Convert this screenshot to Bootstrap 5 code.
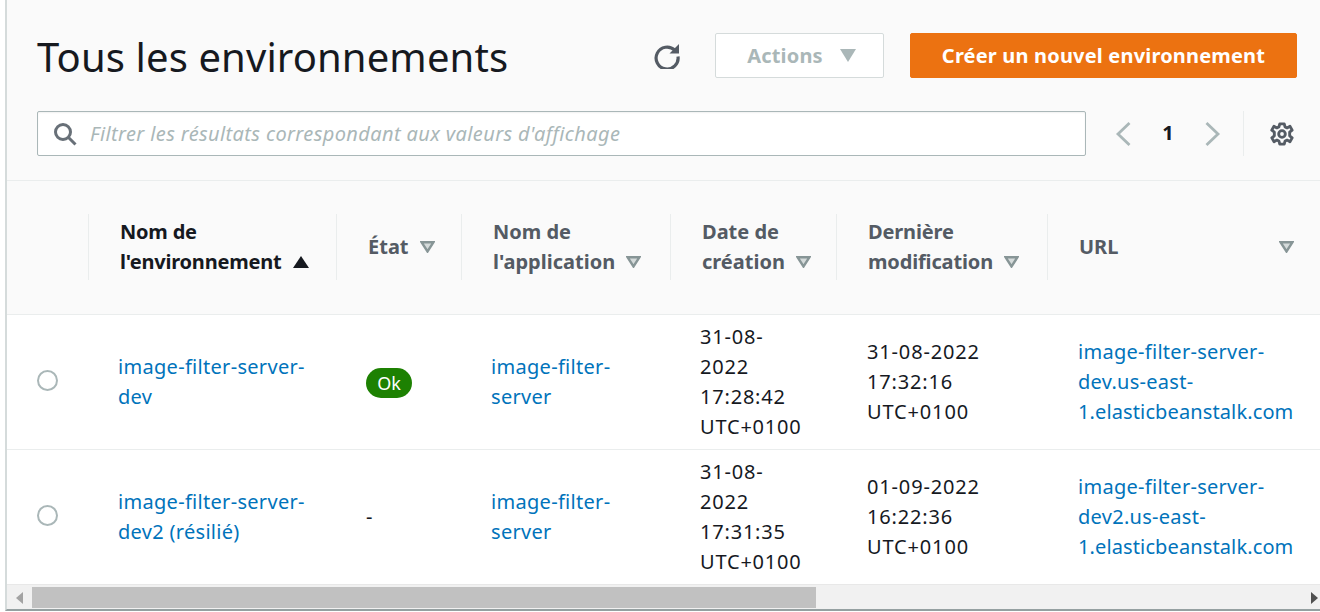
<!doctype html>
<html lang="fr"><head><meta charset="utf-8"><title>Tous les environnements</title>
<link href="https://cdn.jsdelivr.net/npm/bootstrap@5.3.0/dist/css/bootstrap.min.css" rel="stylesheet">
<style>
html,body{height:100%;overflow:hidden;background:#fff}
body{font-family:"Noto Sans","Open Sans",sans-serif;font-size:20px;line-height:30px;color:#16191f}
.frame{margin-left:5px;height:611px;width:1315px;border-left:2px solid #d5dbdb;border-bottom:2px solid #95a0a1;background:#fafafa;overflow:hidden}
.top{padding:33px 23px 24px 30px;border-bottom:1px solid #eaeded;flex:none}
.ttl{font-size:40px;line-height:50px;font-weight:400;margin:0;letter-spacing:.12px;padding-top:2px}
.hh{height:45px}
.refresh{width:26px;height:26px;margin-right:35px}
.btn-act,.btn-new{height:45px;font-size:20px;font-weight:700;border-radius:2px;line-height:28px;padding:0;display:flex;align-items:center;justify-content:center;letter-spacing:.18px}
.btn-act{width:169px;background:#fff;border:1px solid #d5dbdb;color:#aab7b8;gap:17px;margin-right:26px;padding-left:4px}
.btn-new{width:387px;background:#ec7211;border:1px solid #ec7211;color:#fff}
.filter{width:1049px;height:45px;background:#fff;border:1px solid #aab7b8;border-radius:2px;box-shadow:inset 0 1px 2px rgba(0,0,0,.06);padding-left:15px;gap:13px}
.filter input{flex:1;border:0;outline:0;background:transparent;font:italic 400 20px/30px "Noto Sans",sans-serif;color:#16191f;padding:0;letter-spacing:.38px}
.filter input::placeholder{color:#aab7b8;opacity:1}
.pager{margin-left:29px}
.pnum{font-weight:700;font-size:20px;width:20px;text-align:center;margin:0 27px;padding-bottom:2px}
.sep{width:1px;height:45px;background:#eaeded;margin-right:26px}
.gear{margin-right:3px}
.tblw{height:403px;overflow:hidden;flex:none}
table.envs{table-layout:fixed;width:1313px;border-collapse:collapse;margin:0}
.c0{width:81px}.c1{width:248px}.c2{width:125px}.c3{width:209px}.c4{width:166px}.c5{width:211px}.c6{width:273px}
.envs th{height:133px;padding:0;background:#fafafa;border-bottom:1px solid #eaeded;font-weight:700;font-size:20px;color:#545b64;vertical-align:middle}
.envs th .hc{height:66px;border-left:1px solid #eaeded;padding-left:31px;padding-right:10px;display:flex;align-items:center}
.envs th .hc.tight{padding-left:31px}
.envs th .hc.urlh{padding-right:26px}
.envs th.act{color:#16191f}
.envs th .wrap{line-height:30px}
.envs th.act .wrap{letter-spacing:-.2px}
.envs th .wrap.snug{letter-spacing:-.15px}
.envs td{height:135px;padding:0 10px 0 30px;background:#fff;border-bottom:1px solid #eaeded;vertical-align:middle;font-weight:400;color:#16191f}
.envs tr:last-child td{border-bottom:0}
.envs td a{color:#0073bb;text-decoration:none;display:block;letter-spacing:.3px}
.envs td.urlc{padding-left:31px}
.envs td.urlc a{letter-spacing:.28px}
.envs td.urlc a .lastl{letter-spacing:.12px}
.envs td.dt{letter-spacing:.8px}
.envs td.dt2{padding-left:31px;letter-spacing:.85px}
.tri{display:inline-block;vertical-align:1px;margin-left:11px}
.radio{display:block;width:21px;height:21px;border:2px solid #aab7b8;border-radius:50%;background:#fff;margin-bottom:2px}
.okp{display:block;margin-top:2px;height:30px;width:46px;background:#1d8102;color:#fff;border-radius:15px;text-align:center;font-size:18px;line-height:30px}
.sb{height:25px;background:#f1f1f1;border-top:1px solid #e8e8e8;flex:none}
.thumb{width:784px;height:21px;background:#c1c1c1;margin:2px 0 0 9px}
</style></head>
<body>
<div class="frame d-flex flex-column">
 <div class="top">
  <div class="d-flex align-items-center hh">
   <h1 class="ttl flex-grow-1">Tous les environnements</h1>
   <svg class="refresh" viewBox="0 0 26 26" fill="none" stroke="#545b64" stroke-width="3.2"><path d="M20.8 7.2A11 11 0 1 0 24 13.5"/><path d="M25 1v9.5h-9.5z" fill="#545b64" stroke="none"/></svg>
   <button class="btn-act" type="button">Actions <svg width="16" height="13" viewBox="0 0 16 13"><path d="M0 0h16L8 13z" fill="#aab7b8"/></svg></button>
   <button class="btn-new" type="button">Créer un nouvel environnement</button>
  </div>
  <div class="d-flex align-items-center hh" style="margin-top:33px">
   <div class="filter d-flex align-items-center">
    <svg width="24" height="24" viewBox="0 0 24 24" fill="none" stroke="#687078" stroke-width="3"><circle cx="10" cy="10" r="7.5"/><path d="M15.5 15.5l7 7"/></svg>
    <input type="text" placeholder="Filtrer les résultats correspondant aux valeurs d'affichage">
   </div>
   <div class="pager d-flex align-items-center">
    <svg width="16" height="26" viewBox="0 0 16 26" fill="none" stroke="#aab7b8" stroke-width="2.8"><path d="M14.5 2L3 13l11.5 11"/></svg>
    <span class="pnum">1</span>
    <svg width="16" height="26" viewBox="0 0 16 26" fill="none" stroke="#aab7b8" stroke-width="2.8"><path d="M1.5 2L13 13 1.5 24"/></svg>
   </div>
   <div class="sep ms-auto"></div>
   <svg class="gear" width="24" height="24" viewBox="0 0 26 26" fill="none" stroke="#545b64" stroke-width="3.1" stroke-linejoin="round"><circle cx="13" cy="13" r="3.6"/><path d="M10.6 2h4.8l.9 3.4 2.2 1 3.1-1.7 2.4 4.1-2.7 2.2v4l2.7 2.2-2.4 4.1-3.1-1.7-2.2 1-.9 3.4h-4.8l-.9-3.4-2.2-1-3.1 1.7-2.4-4.1 2.7-2.2v-4L1.9 8.8l2.4-4.1 3.1 1.7 2.2-1z"/></svg>
  </div>
 </div>
 <div class="tblw">
  <table class="envs">
   <colgroup><col class="c0"><col class="c1"><col class="c2"><col class="c3"><col class="c4"><col class="c5"><col class="c6"></colgroup>
   <thead><tr>
    <th></th>
    <th class="act"><div class="hc tight"><div class="wrap">Nom de<br>l'environnement<svg class="tri" width="16" height="12" viewBox="0 0 16 12"><path d="M8 0l8 12H0z" fill="#16191f"/></svg></div></div></th>
    <th><div class="hc tight"><div class="wrap">État<svg class="tri" width="15" height="12" viewBox="0 0 15 12"><path d="M1.5 1.2h12L7.5 10.5z" fill="#d5dbdb" stroke="#879596" stroke-width="2.4"/></svg></div></div></th>
    <th><div class="hc"><div class="wrap">Nom de<br>l'application<svg class="tri" width="15" height="12" viewBox="0 0 15 12"><path d="M1.5 1.2h12L7.5 10.5z" fill="#d5dbdb" stroke="#879596" stroke-width="2.4"/></svg></div></div></th>
    <th><div class="hc"><div class="wrap">Date de<br>création<svg class="tri" width="15" height="12" viewBox="0 0 15 12"><path d="M1.5 1.2h12L7.5 10.5z" fill="#d5dbdb" stroke="#879596" stroke-width="2.4"/></svg></div></div></th>
    <th><div class="hc"><div class="wrap snug">Dernière<br>modification<svg class="tri" width="15" height="12" viewBox="0 0 15 12"><path d="M1.5 1.2h12L7.5 10.5z" fill="#d5dbdb" stroke="#879596" stroke-width="2.4"/></svg></div></div></th>
    <th><div class="hc urlh justify-content-between"><div class="wrap">URL</div><svg width="15" height="12" viewBox="0 0 15 12"><path d="M1.5 1.2h12L7.5 10.5z" fill="#d5dbdb" stroke="#879596" stroke-width="2.4"/></svg></div></th>
   </tr></thead>
   <tbody>
    <tr>
     <td><span class="radio"></span></td>
     <td><a href="#">image-filter-server-<br>dev</a></td>
     <td><span class="okp">Ok</span></td>
     <td><a href="#">image-filter-<br>server</a></td>
     <td class="dt">31-08-<br>2022<br>17:28:42<br>UTC+0100</td>
     <td class="dt2">31-08-2022<br>17:32:16<br>UTC+0100</td>
     <td class="urlc"><a href="#">image-filter-server-<br>dev.us-east-<br><span class="lastl">1.elasticbeanstalk.com</span></a></td>
    </tr>
    <tr>
     <td><span class="radio"></span></td>
     <td><a href="#">image-filter-server-<br>dev2 (résilié)</a></td>
     <td>-</td>
     <td><a href="#">image-filter-<br>server</a></td>
     <td class="dt">31-08-<br>2022<br>17:31:35<br>UTC+0100</td>
     <td class="dt2">01-09-2022<br>16:22:36<br>UTC+0100</td>
     <td class="urlc"><a href="#">image-filter-server-<br>dev2.us-east-<br><span class="lastl">1.elasticbeanstalk.com</span></a></td>
    </tr>
   </tbody>
  </table>
 </div>
 <div class="sb d-flex align-items-start">
  <svg width="7" height="12" viewBox="0 0 7 12" style="margin:7px 0 0 9px"><path d="M7 0v12L0 6z" fill="#a3a3a3"/></svg>
  <div class="thumb"></div>
  <svg class="ms-auto" width="7" height="12" viewBox="0 0 7 12" style="margin:7px 2px 0 0"><path d="M0 0v12l7-6z" fill="#505050"/></svg>
 </div>
</div>
<script src="https://cdn.jsdelivr.net/npm/bootstrap@5.3.0/dist/js/bootstrap.bundle.min.js"></script>
</body></html>
